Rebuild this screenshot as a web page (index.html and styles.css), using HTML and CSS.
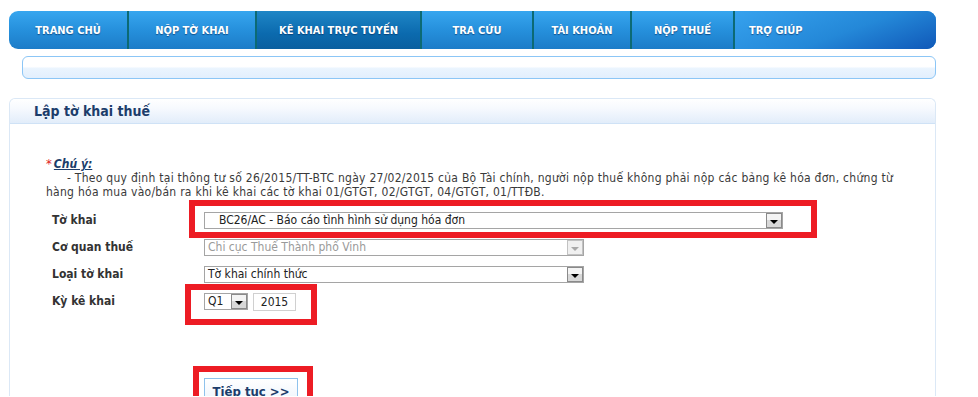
FILE: index.html
```html
<!DOCTYPE html>
<html lang="vi">
<head>
    <meta charset="UTF-8">
    <meta name="viewport" content="width=device-width, initial-scale=1.0">
    <title>Lập tờ khai thuế</title>
    <link rel="stylesheet" href="styles.css">
</head>
<body>

<div class="page">

    <!-- Menu chinh -->
    <nav class="menu">
        <a href="#">TRANG CHỦ</a>
        <a href="#">NỘP TỜ KHAI</a>
        <a href="#" class="active">KÊ KHAI TRỰC TUYẾN</a>
        <a href="#">TRA CỨU</a>
        <a href="#">TÀI KHOẢN</a>
        <a href="#">NỘP THUẾ</a>
        <a href="#">TRỢ GIÚP</a>
    </nav>

    <div class="subbar"></div>

    <!-- Khung lap to khai -->
    <div class="panel">
        <div class="panel-head">
            <h2>Lập tờ khai thuế</h2>
        </div>

        <div class="panel-body">
            <div class="note">
                <div><span class="star">*</span><span class="note-title">Chú ý:</span></div>
                <p class="indent">- Theo quy định tại thông tư số 26/2015/TT-BTC ngày 27/02/2015 của Bộ Tài chính, người nộp thuế không phải nộp các bảng kê hóa đơn, chứng từ</p>
                <p>hàng hóa mua vào/bán ra khi kê khai các tờ khai 01/GTGT, 02/GTGT, 04/GTGT, 01/TTĐB.</p>
            </div>

            <div class="form">
                <div class="row">
                    <label>Tờ khai</label>
                    <div class="select select-wide">
                        <span class="value value-pad">BC26/AC - Báo cáo tình hình sử dụng hóa đơn</span>
                        <span class="arrow"></span>
                    </div>
                </div>
                <div class="row">
                    <label>Cơ quan thuế</label>
                    <div class="select select-mid disabled">
                        <span class="value">Chi cục Thuế Thành phố Vinh</span>
                        <span class="arrow"></span>
                    </div>
                </div>
                <div class="row">
                    <label>Loại tờ khai</label>
                    <div class="select select-mid">
                        <span class="value">Tờ khai chính thức</span>
                        <span class="arrow"></span>
                    </div>
                </div>
                <div class="row">
                    <label>Kỳ kê khai</label>
                    <div class="period">
                        <div class="select select-small">
                            <span class="value">Q1</span>
                            <span class="arrow"></span>
                        </div>
                        <div class="year">2015</div>
                    </div>
                </div>

                <div class="actions">
                    <button class="btn-next">Tiếp tục &gt;&gt;</button>
                </div>

                <!-- khung danh dau mau do -->
                <div class="mark mark-1"></div>
                <div class="mark mark-2"></div>
                <div class="mark mark-3"></div>
            </div>
        </div>
    </div>

</div>

</body>
</html>
```

FILE: styles.css
```css
/* Trang lap to khai */
body {
    margin: 0;
    background-color: #ffffff;
    font-family: 'DejaVu Sans Condensed', 'DejaVu Sans', sans-serif;
    font-size: 12px;
    color: #333333;
}

.page {
    width: 927px;
    margin-left: 9px;
    padding-top: 11px;
}

/* Menu */
.menu {
    display: flex;
    height: 38px;
    border-radius: 9px;
    overflow: hidden;
    background: linear-gradient(180deg, #37a6ef 0%, #2690dc 50%, #1c7cc8 100%);
}

.menu a {
    display: flex;
    align-items: center;
    justify-content: center;
    color: #ffffff;
    text-decoration: none;
    font-weight: bold;
    font-size: 11px;
    text-shadow: 0 1px 1px rgba(0, 40, 90, 0.6);
    border-left: 2px solid #0c6a74;
    box-sizing: border-box;
}

.menu a:first-child {
    border-left: none;
}

.menu a:nth-child(1) { width: 118px; }
.menu a:nth-child(2) { width: 128px; }
.menu a:nth-child(3) { width: 165px; }
.menu a:nth-child(4) { width: 112px; }
.menu a:nth-child(5) { width: 98px; }
.menu a:nth-child(6) { width: 103px; }

.menu a:last-child {
    flex: 1;
    justify-content: flex-start;
    padding-left: 14px;
    background: linear-gradient(160deg, #36a2ee 0%, #2488d8 55%, #1058b8 100%);
}

.menu a.active {
    background: linear-gradient(180deg, #1f86c6 0%, #0b6aae 60%, #0a5f9f 100%);
}

.subbar {
    height: 21px;
    margin: 7px 0 0 13px;
    border: 1px solid #8cc6f6;
    border-radius: 6px;
    background: linear-gradient(180deg, #ffffff 0%, #ffffff 45%, #eaf4fe 55%, #e2effd 100%);
}

/* Panel */
.panel {
    margin-top: 19px;
    border: 1px solid #dbe8f6;
    border-bottom: none;
    border-radius: 6px 6px 0 0;
    height: 297px;
}

.panel-head {
    height: 24px;
    border-bottom: 1px solid #cfe2f6;
    background: linear-gradient(180deg, #ffffff 0%, #f6f9fe 40%, #e2edfa 100%);
    border-radius: 6px 6px 0 0;
}

.panel-head h2 {
    margin: 0;
    padding-left: 24px;
    line-height: 24px;
    font-size: 14px;
    font-weight: bold;
    color: #1c3d6b;
}

.panel-body {
    padding: 33px 0 0 36px;
}

/* Chu y */
.note {
    line-height: 14px;
}

.star {
    color: #e01b1b;
    font-size: 13px;
    margin-right: 2px;
}

.note-title {
    font-weight: bold;
    font-style: italic;
    text-decoration: underline;
    color: #1c3d6b;
}

.note p {
    margin: 0;
    color: #3a3a3a;
    letter-spacing: 0.27px;
    white-space: nowrap;
}

.note p.indent {
    padding-left: 21px;
}

/* Form */
.form {
    position: relative;
    margin-top: 13px;
}

.row {
    display: flex;
    align-items: flex-start;
    height: 27px;
}

.row label {
    width: 152px;
    padding-left: 6px;
    font-weight: bold;
    color: #333333;
    line-height: 16px;
}

.select {
    display: flex;
    height: 17px;
    border: 1px solid #a5a5a5;
    box-sizing: border-box;
    background-color: #ffffff;
}

.select .value {
    flex: 1;
    padding-left: 3px;
    line-height: 15px;
    white-space: nowrap;
    overflow: hidden;
    color: #222222;
}

.select .value-pad {
    padding-left: 14px;
}

.select .arrow {
    position: relative;
    width: 16px;
    border: 1px solid #8a8a8a;
    box-sizing: border-box;
    background: linear-gradient(180deg, #f4f4f4 0%, #f4f4f4 50%, #d8d8d8 50%, #d8d8d8 100%);
}

.select .arrow::after {
    content: "";
    position: absolute;
    left: 3px;
    top: 6px;
    border-left: 4px solid transparent;
    border-right: 4px solid transparent;
    border-top: 4px solid #000000;
}

.select-wide { width: 579px; }
.select-mid { width: 380px; }
.select-small { width: 44px; }

.disabled .value {
    color: #9a9a9a;
}

.disabled .arrow {
    border-color: #c2c2c2;
    background: #f0f0f0;
}

.disabled .arrow::after {
    border-top-color: #a8a8a8;
}

.period {
    display: flex;
    gap: 5px;
}

.year {
    width: 43px;
    height: 18px;
    border: 1px solid #d0d0d0;
    box-sizing: border-box;
    text-align: center;
    line-height: 16px;
    color: #222222;
}

.actions {
    padding: 58px 0 0 158px;
}

.btn-next {
    width: 94px;
    height: 24px;
    border: 1px solid #8ec2ec;
    background: linear-gradient(180deg, #ffffff 0%, #eef5fc 100%);
    font-family: 'DejaVu Sans Condensed', 'DejaVu Sans', sans-serif;
    font-size: 13px;
    font-weight: bold;
    color: #1c3d6b;
    padding: 2px 0 0 0;
    cursor: pointer;
}

/* Khung do */
.mark {
    position: absolute;
    border: 6px solid #ed1c24;
}

.mark-1 {
    left: 143px;
    top: -12px;
    width: 616px;
    height: 26px;
}

.mark-2 {
    left: 139px;
    top: 72px;
    width: 120px;
    height: 29px;
}

.mark-3 {
    left: 147px;
    top: 154px;
    width: 108px;
    height: 40px;
}
```
